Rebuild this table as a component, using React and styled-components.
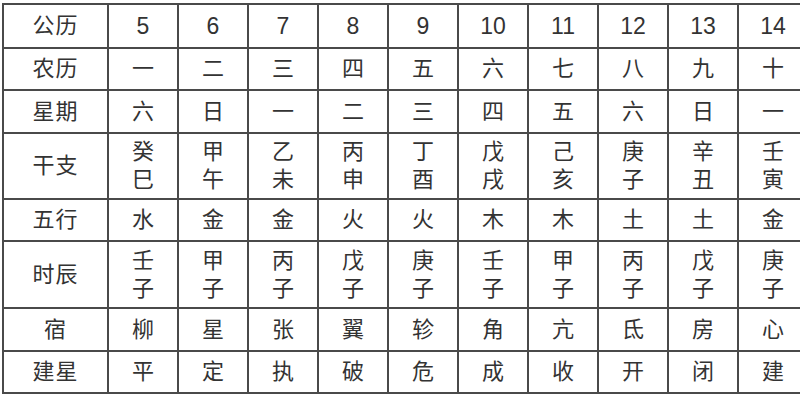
import React from "react"
import styled, { createGlobalStyle } from "styled-components"

const GlobalStyle = createGlobalStyle`
html, body {
  margin: 0;
  padding: 0;
  background: #ffffff;
  overflow: hidden;
}
`

const Page = styled.div`
width: 800px;
height: 400px;
overflow: hidden;
padding: 3px 0 0 2px;
box-sizing: border-box;
`

const Table = styled.table`
border-collapse: collapse;
table-layout: fixed;
width: 807px;
font-family: "Liberation Sans", "Noto Sans CJK SC", sans-serif;
color: #333;
`

const Row = styled.tr`
height: ${props => props.h}px;
`

const Cell = styled.td`
border: 2px solid #4a4a4a;
padding: 0;
text-align: center;
vertical-align: middle;
font-size: ${props => (props.num ? 23 : 22)}px;
line-height: 28px;
`

const Label = styled(Cell)`
letter-spacing: 1px;
`

const days = [5, 6, 7, 8, 9, 10, 11, 12, 13, 14]

const rows = [
  { label: "公历", h: 44, num: true, cells: days.map(String) },
  { label: "农历", h: 42, cells: ["一", "二", "三", "四", "五", "六", "七", "八", "九", "十"] },
  { label: "星期", h: 43, cells: ["六", "日", "一", "二", "三", "四", "五", "六", "日", "一"] },
  { label: "干支", h: 66, cells: ["癸巳", "甲午", "乙未", "丙申", "丁酉", "戊戌", "己亥", "庚子", "辛丑", "壬寅"] },
  { label: "五行", h: 42, cells: ["水", "金", "金", "火", "火", "木", "木", "土", "土", "金"] },
  { label: "时辰", h: 67, cells: ["壬子", "甲子", "丙子", "戊子", "庚子", "壬子", "甲子", "丙子", "戊子", "庚子"] },
  { label: "宿", h: 43, cells: ["柳", "星", "张", "翼", "轸", "角", "亢", "氐", "房", "心"] },
  { label: "建星", h: 42, cells: ["平", "定", "执", "破", "危", "成", "收", "开", "闭", "建"] },
]

const App = () => {
  return (
    <Page>
      <GlobalStyle />
      <Table>
        <colgroup>
          <col style={{ width: "105px" }} />
          {days.map(d => <col key={d} style={{ width: "70px" }} />)}
        </colgroup>
        <tbody>
          {rows.map(r => (
            <Row key={r.label} h={r.h}>
              <Label>{r.label}</Label>
              {r.cells.map((c, i) => (
                <Cell key={i} num={r.num}>
                  {r.h > 60 ? <>{c[0]}<br />{c[1]}</> : c}
                </Cell>
              ))}
            </Row>
          ))}
        </tbody>
      </Table>
    </Page>
  )
}

export default App
